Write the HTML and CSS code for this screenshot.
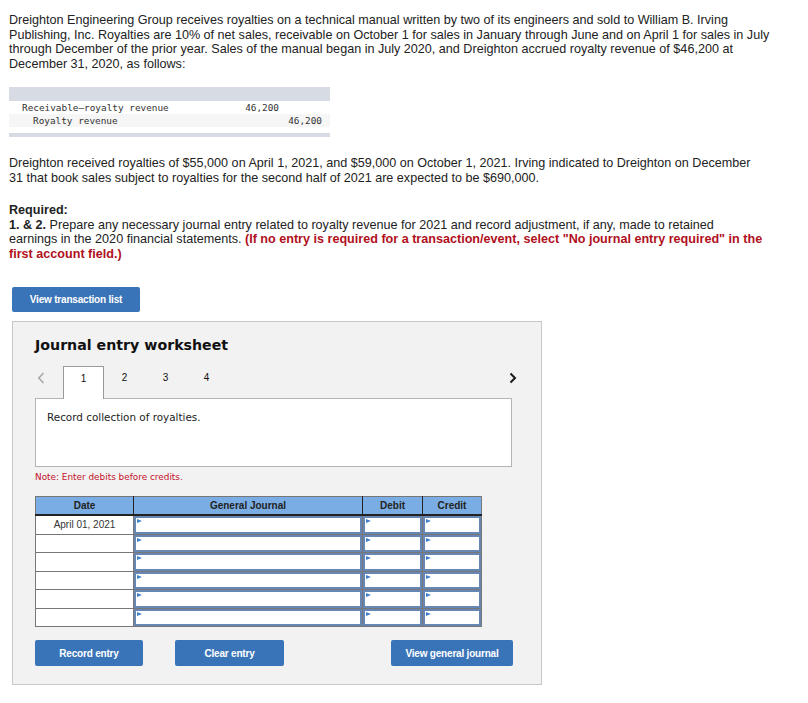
FILE: index.html
```html
<!DOCTYPE html>
<html lang="en">
<head>
    <meta charset="UTF-8">
    <meta name="viewport" content="width=device-width, initial-scale=1.0">
    <title>Journal Entry Worksheet</title>
    <link rel="stylesheet" href="styles.css">
</head>
<body>
    <div class="question">
        <p>Dreighton Engineering Group receives royalties on a technical manual written by two of its engineers and sold to William B. Irving<br>
        Publishing, Inc. Royalties are 10% of net sales, receivable on October 1 for sales in January through June and on April 1 for sales in July<br>
        through December of the prior year. Sales of the manual began in July 2020, and Dreighton accrued royalty revenue of $46,200 at<br>
        December 31, 2020, as follows:</p>

        <table class="entry-example">
            <tr class="bar"><td colspan="3"></td></tr>
            <tr>
                <td class="account">Receivable—royalty revenue</td>
                <td class="amount">46,200</td>
                <td class="amount"></td>
            </tr>
            <tr class="alt">
                <td class="account indent">Royalty revenue</td>
                <td class="amount"></td>
                <td class="amount">46,200</td>
            </tr>
            <tr class="spacer"><td colspan="3"></td></tr>
            <tr class="bar thin"><td colspan="3"></td></tr>
        </table>

        <p class="received">Dreighton received royalties of $55,000 on April 1, 2021, and $59,000 on October 1, 2021. Irving indicated to Dreighton on December<br>
        31 that book sales subject to royalties for the second half of 2021 are expected to be $690,000.</p>

        <p class="required"><b>Required:</b><br>
        <b>1. &amp; 2.</b> Prepare any necessary journal entry related to royalty revenue for 2021 and record adjustment, if any, made to retained<br>
        earnings in the 2020 financial statements. <b class="alert">(If no entry is required for a transaction/event, select "No journal entry required" in the<br>
        first account field.)</b></p>
    </div>

    <div class="work-area">
        <button class="btn btn-list">View transaction list</button>

        <div class="worksheet">
            <h2>Journal entry worksheet</h2>

            <div class="tabs">
                <span class="arrow prev">
                    <svg width="8" height="12" viewBox="0 0 8 12"><path d="M6.5 1 L1.8 6 L6.5 11" fill="none" stroke="#a8a8a8" stroke-width="1.6"/></svg>
                </span>
                <span class="tab active">1</span>
                <span class="tab">2</span>
                <span class="tab">3</span>
                <span class="tab">4</span>
                <span class="arrow next">
                    <svg width="8" height="12" viewBox="0 0 8 12"><path d="M1.5 1.5 L6 6 L1.5 10.5" fill="none" stroke="#1a1a1a" stroke-width="2"/></svg>
                </span>
            </div>
            <div class="tab-panel">Record collection of royalties.</div>

            <p class="note">Note: Enter debits before credits.</p>

            <table class="journal">
                <thead>
                    <tr>
                        <th class="col-date">Date</th>
                        <th class="col-account">General Journal</th>
                        <th class="col-money">Debit</th>
                        <th>Credit</th>
                    </tr>
                </thead>
                <tbody>
                    <tr>
                        <td class="date">April 01, 2021</td>
                        <td class="input"><div class="field"></div></td>
                        <td class="input"><div class="field"></div></td>
                        <td class="input"><div class="field"></div></td>
                    </tr>
                    <tr>
                        <td class="date"></td>
                        <td class="input"><div class="field"></div></td>
                        <td class="input"><div class="field"></div></td>
                        <td class="input"><div class="field"></div></td>
                    </tr>
                    <tr>
                        <td class="date"></td>
                        <td class="input"><div class="field"></div></td>
                        <td class="input"><div class="field"></div></td>
                        <td class="input"><div class="field"></div></td>
                    </tr>
                    <tr>
                        <td class="date"></td>
                        <td class="input"><div class="field"></div></td>
                        <td class="input"><div class="field"></div></td>
                        <td class="input"><div class="field"></div></td>
                    </tr>
                    <tr>
                        <td class="date"></td>
                        <td class="input"><div class="field"></div></td>
                        <td class="input"><div class="field"></div></td>
                        <td class="input"><div class="field"></div></td>
                    </tr>
                    <tr>
                        <td class="date"></td>
                        <td class="input"><div class="field"></div></td>
                        <td class="input"><div class="field"></div></td>
                        <td class="input"><div class="field"></div></td>
                    </tr>
                </tbody>
            </table>

            <div class="actions">
                <button class="btn btn-record">Record entry</button>
                <button class="btn btn-clear">Clear entry</button>
                <button class="btn btn-view">View general journal</button>
            </div>
        </div>
    </div>
</body>
</html>
```

FILE: styles.css
```css
body {
    margin: 0;
    padding: 13px 9px 0 9px;
    font-family: "Liberation Sans", Arial, sans-serif;
    color: #222;
    background: #fff;
}
p {
    margin: 0;
}
.question {
    width: 790px;
    font-size: 12.6px;
    line-height: 14.5px;
}
.entry-example {
    margin-top: 16px;
    width: 321px;
    border-collapse: collapse;
    font-family: "DejaVu Sans Mono", "Liberation Mono", monospace;
    font-size: 9.4px;
    color: #333;
}
.entry-example td {
    padding: 0;
    height: 13px;
    line-height: 13px;
}
.entry-example .bar td {
    background-color: #d7dbe4;
    height: 14px;
}
.entry-example .bar.thin td {
    height: 4px;
}
.entry-example .spacer td {
    height: 6px;
}
.entry-example .alt td {
    background-color: #f6f6f6;
}
.entry-example .account {
    padding-left: 13px;
}
.entry-example .indent {
    padding-left: 24px;
}
.entry-example .amount {
    text-align: right;
    width: 35px;
    padding-right: 8px;
}
.received {
    margin-top: 19px;
}
.required {
    margin-top: 18px;
}
.alert {
    color: #b0101c;
}
.work-area {
    padding-left: 3px;
}
.btn {
    display: block;
    background-color: #3a74b8;
    color: #fff;
    border: none;
    border-radius: 2px;
    font-family: "Liberation Sans", Arial, sans-serif;
    font-size: 10px;
    font-weight: bold;
    letter-spacing: -0.2px;
    height: 26px;
    padding: 0;
    cursor: pointer;
}
.btn-list {
    margin-top: 26px;
    width: 128px;
    height: 25px;
}
.worksheet {
    margin-top: 9px;
    width: 496px;
    border: 1px solid #c8c8c8;
    background-color: #f2f2f2;
    padding: 14px 10px 18px 22px;
}
.worksheet h2 {
    margin: 0;
    font-family: "DejaVu Sans", Verdana, sans-serif;
    font-size: 14.2px;
    line-height: 18px;
    font-weight: bold;
    color: #111;
}
.tabs {
    margin-top: 12px;
    width: 482px;
    height: 32px;
    display: flex;
    align-items: flex-start;
    font-size: 10px;
    color: #111;
}
.arrow {
    display: flex;
    align-items: center;
    height: 24px;
}
.prev {
    width: 28px;
    padding-left: 2px;
    box-sizing: border-box;
}
.next {
    margin-left: auto;
}
.tab {
    width: 41px;
    height: 32px;
    box-sizing: border-box;
    text-align: center;
    padding-top: 6px;
}
.tab.active {
    background-color: #fff;
    border: 1px solid #999;
    border-bottom: none;
    height: 33px;
    position: relative;
    z-index: 1;
}
.tab-panel {
    width: 477px;
    height: 69px;
    box-sizing: border-box;
    background-color: #fff;
    border: 1px solid #b4b4b4;
    padding: 12px 11px;
    font-family: "DejaVu Sans", Verdana, sans-serif;
    font-size: 10.4px;
    color: #222;
}
.note {
    margin-top: 4px;
    font-family: "DejaVu Sans", Verdana, sans-serif;
    font-size: 8.9px;
    line-height: 12px;
    color: #c4102a;
}
.journal {
    margin-top: 13px;
    width: 447px;
    border-collapse: collapse;
    table-layout: fixed;
    font-size: 10px;
    border: 1px solid #777;
}
.journal th {
    background-color: #7aade3;
    height: 17px;
    padding: 0;
    font-weight: bold;
    color: #222;
    border-left: 1px solid #222;
    border-bottom: 2px solid #222;
}
.journal th:first-child {
    border-left: none;
}
.col-date {
    width: 97px;
}
.col-account {
    width: 228px;
}
.col-money {
    width: 59px;
}
.journal td {
    height: 17.5px;
    padding: 0;
    border: 1px solid #777;
    background-color: #fff;
}
.journal .date {
    text-align: center;
    color: #333;
}
.field {
    position: relative;
    height: 17.5px;
    box-sizing: border-box;
    border: 2px solid #6687b6;
    background-color: #fff;
}
.field::before {
    content: "";
    position: absolute;
    top: 1px;
    left: 1px;
    border-left: 5px solid #3f7fcc;
    border-top: 2.5px solid transparent;
    border-bottom: 2.5px solid transparent;
}
.actions {
    margin-top: 13px;
    width: 478px;
    display: flex;
    gap: 32px;
}
.btn-record {
    width: 108px;
}
.btn-clear {
    width: 109px;
}
.btn-view {
    width: 122px;
    margin-left: auto;
}
```
